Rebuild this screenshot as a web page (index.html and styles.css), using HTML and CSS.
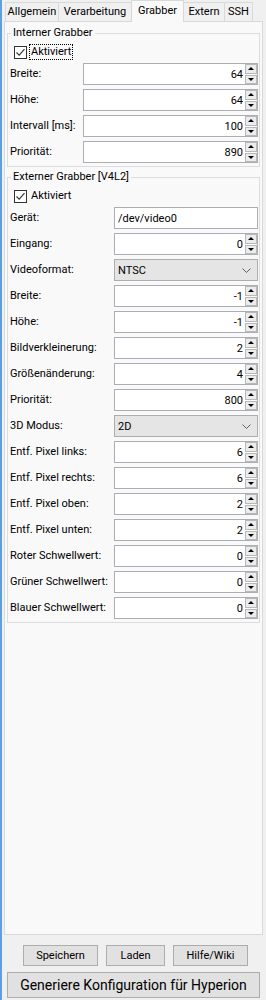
FILE: index.html
```html
<!DOCTYPE html>
<html lang="de">
<head>
    <meta charset="UTF-8">
    <meta name="viewport" content="width=device-width, initial-scale=1.0">
    <title>Hyperion Konfiguration</title>
    <link rel="stylesheet" href="styles.css">
</head>
<body>
    <div class="window">
        <div class="tabs">
            <div class="tab tab-allgemein">Allgemein</div>
            <div class="tab tab-verarbeitung">Verarbeitung</div>
            <div class="tab tab-grabber active">Grabber</div>
            <div class="tab tab-extern">Extern</div>
            <div class="tab tab-ssh">SSH</div>
        </div>

        <div class="pane">
            <!-- Interner Grabber -->
            <fieldset class="group">
                <legend>Interner Grabber</legend>
                <div class="check">
                    <span class="box"><svg width="11" height="11" viewBox="0 0 11 11"><path d="M1.5 5.5 L4.2 8.2 L9.5 2.2" fill="none" stroke="#333" stroke-width="1.1"/></svg></span>
                    <span class="caption focus">Aktiviert</span>
                </div>
                <div class="form intern">
                    <div class="label">Breite:</div>
                    <div class="spin"><span class="value">64</span><span class="arrows"><span class="up"></span><span class="down"></span></span></div>
                    <div class="label">Höhe:</div>
                    <div class="spin"><span class="value">64</span><span class="arrows"><span class="up"></span><span class="down"></span></span></div>
                    <div class="label">Intervall [ms]:</div>
                    <div class="spin"><span class="value">100</span><span class="arrows"><span class="up"></span><span class="down"></span></span></div>
                    <div class="label">Priorität:</div>
                    <div class="spin"><span class="value">890</span><span class="arrows"><span class="up"></span><span class="down"></span></span></div>
                </div>
            </fieldset>

            <!-- Externer Grabber -->
            <fieldset class="group extern-group">
                <legend>Externer Grabber [V4L2]</legend>
                <div class="check">
                    <span class="box"><svg width="11" height="11" viewBox="0 0 11 11"><path d="M1.5 5.5 L4.2 8.2 L9.5 2.2" fill="none" stroke="#333" stroke-width="1.1"/></svg></span>
                    <span class="caption">Aktiviert</span>
                </div>
                <div class="form extern">
                    <div class="label">Gerät:</div>
                    <div class="line">/dev/video0</div>
                    <div class="label">Eingang:</div>
                    <div class="spin"><span class="value">0</span><span class="arrows"><span class="up"></span><span class="down"></span></span></div>
                    <div class="label">Videoformat:</div>
                    <div class="combo"><span class="value">NTSC</span><svg class="chevron" width="9" height="5" viewBox="0 0 9 5"><path d="M0.5 0.5 L4.5 4.5 L8.5 0.5" fill="none" stroke="#606060" stroke-width="1"/></svg></div>
                    <div class="label">Breite:</div>
                    <div class="spin"><span class="value">-1</span><span class="arrows"><span class="up"></span><span class="down"></span></span></div>
                    <div class="label">Höhe:</div>
                    <div class="spin"><span class="value">-1</span><span class="arrows"><span class="up"></span><span class="down"></span></span></div>
                    <div class="label">Bildverkleinerung:</div>
                    <div class="spin"><span class="value">2</span><span class="arrows"><span class="up"></span><span class="down"></span></span></div>
                    <div class="label">Größenänderung:</div>
                    <div class="spin"><span class="value">4</span><span class="arrows"><span class="up"></span><span class="down"></span></span></div>
                    <div class="label">Priorität:</div>
                    <div class="spin"><span class="value">800</span><span class="arrows"><span class="up"></span><span class="down"></span></span></div>
                    <div class="label">3D Modus:</div>
                    <div class="combo"><span class="value">2D</span><svg class="chevron" width="9" height="5" viewBox="0 0 9 5"><path d="M0.5 0.5 L4.5 4.5 L8.5 0.5" fill="none" stroke="#606060" stroke-width="1"/></svg></div>
                    <div class="label">Entf. Pixel links:</div>
                    <div class="spin"><span class="value">6</span><span class="arrows"><span class="up"></span><span class="down"></span></span></div>
                    <div class="label">Entf. Pixel rechts:</div>
                    <div class="spin"><span class="value">6</span><span class="arrows"><span class="up"></span><span class="down"></span></span></div>
                    <div class="label">Entf. Pixel oben:</div>
                    <div class="spin"><span class="value">2</span><span class="arrows"><span class="up"></span><span class="down"></span></span></div>
                    <div class="label">Entf. Pixel unten:</div>
                    <div class="spin"><span class="value">2</span><span class="arrows"><span class="up"></span><span class="down"></span></span></div>
                    <div class="label">Roter Schwellwert:</div>
                    <div class="spin"><span class="value">0</span><span class="arrows"><span class="up"></span><span class="down"></span></span></div>
                    <div class="label">Grüner Schwellwert:</div>
                    <div class="spin"><span class="value">0</span><span class="arrows"><span class="up"></span><span class="down"></span></span></div>
                    <div class="label">Blauer Schwellwert:</div>
                    <div class="spin"><span class="value">0</span><span class="arrows"><span class="up"></span><span class="down"></span></span></div>
                </div>
            </fieldset>
        </div>

        <div class="actions">
            <div class="button-row">
                <button class="btn save">Speichern</button>
                <button class="btn load">Laden</button>
                <button class="btn help">Hilfe/Wiki</button>
            </div>
            <button class="btn generate">Generiere Konfiguration für Hyperion</button>
        </div>
    </div>
</body>
</html>
```

FILE: styles.css
```css
* {
    box-sizing: border-box;
}

body {
    margin: 0;
    font-family: Roboto, "Noto Sans", sans-serif;
    font-size: 11px;
    color: #000;
    background-color: #f0f0f0;
}

/* window with the blue frame on the left */
.window {
    height: 1000px;
    border-left: 2px solid #5f9fdb;
    display: flex;
    flex-direction: column;
    overflow: hidden;
}

/* tab bar */
.tabs {
    display: flex;
    align-items: flex-start;
    height: 22px;
    padding-left: 3px;
    margin-bottom: -1px;
    position: relative;
    z-index: 1;
}

.tab {
    height: 19px;
    margin-top: 2px;
    margin-right: -1px;
    line-height: 17px;
    text-align: center;
    border: 1px solid #d9d9d9;
    border-bottom: none;
    background-color: #f0f0f0;
    white-space: nowrap;
}

.tab.active {
    height: 22px;
    margin-top: 0;
    line-height: 19px;
    background-color: #f9f9f9;
}

.tab-allgemein { width: 54px; }
.tab-verarbeitung { width: 74px; }
.tab-grabber { width: 53px; }
.tab-extern { width: 42px; }
.tab-ssh { width: 29px; }

/* tab page */
.pane {
    flex: 1;
    margin: 0 3px 0 2px;
    padding: 4px 2px 0;
    border: 1px solid #d9d9d9;
    background-color: #f9f9f9;
}

.group {
    margin: 0;
    padding: 3px 1px 3px;
    border: 1px solid #dcdcdc;
    min-width: 0;
}

.extern-group {
    margin-top: 3px;
}

.group legend {
    margin-left: 2px;
    padding: 0 2px;
    line-height: 14px;
}

/* checkbox row */
.check {
    display: flex;
    align-items: flex-start;
    height: 16px;
    padding-left: 5px;
}

.box {
    width: 13px;
    height: 13px;
    margin-top: 3px;
    border: 1px solid #333;
    background-color: #fff;
    display: flex;
    align-items: center;
    justify-content: center;
}

.caption {
    margin-left: 2px;
    margin-top: 1px;
    padding: 0 1px;
    line-height: 14px;
    border: 1px solid transparent;
}

.caption.focus {
    border: 1px dotted #000;
}

/* label / field grid */
.form {
    display: grid;
    row-gap: 4px;
    margin-top: 4px;
}

.form.intern {
    grid-template-columns: 74px 1fr;
}

.form.extern {
    grid-template-columns: 105px 1fr;
}

.label {
    height: 22px;
    line-height: 22px;
    padding-left: 1px;
    white-space: nowrap;
}

.spin,
.line,
.combo {
    height: 22px;
    border: 1px solid #abadb3;
    background-color: #fff;
    display: flex;
    align-items: center;
}

.spin .value {
    flex: 1;
    text-align: right;
    padding-right: 2px;
}

.arrows {
    width: 12px;
    height: 20px;
    display: flex;
    flex-direction: column;
    gap: 1px;
}

.arrows span {
    flex: 1;
    border: 1px solid #b9b9b9;
    background-color: #ececec;
    position: relative;
}

.arrows .up::after,
.arrows .down::after {
    content: "";
    position: absolute;
    left: 2px;
    top: 2px;
    border-left: 3px solid transparent;
    border-right: 3px solid transparent;
}

.arrows .up::after {
    border-bottom: 3px solid #000;
}

.arrows .down::after {
    border-top: 3px solid #000;
}

.line {
    padding-left: 3px;
}

.combo {
    border-color: #adadad;
    background-color: #e5e5e5;
    padding: 0 6px 0 3px;
}

.combo .value {
    flex: 1;
}

/* bottom buttons */
.actions {
    padding: 10px 0 2px;
    display: flex;
    flex-direction: column;
    gap: 6px;
}

.button-row {
    display: flex;
    gap: 8px;
    padding-left: 21px;
}

.btn {
    font-family: Roboto, "Noto Sans", sans-serif;
    font-size: 11px;
    color: #000;
    height: 21px;
    padding: 0;
    border: 1px solid #adadad;
    background-color: #e1e1e1;
}

.save {
    width: 75px;
}

.load {
    width: 59px;
}

.help {
    width: 75px;
}

.generate {
    height: 26px;
    margin: 0 6px 0 5px;
    font-size: 14px;
    white-space: nowrap;
}
```
